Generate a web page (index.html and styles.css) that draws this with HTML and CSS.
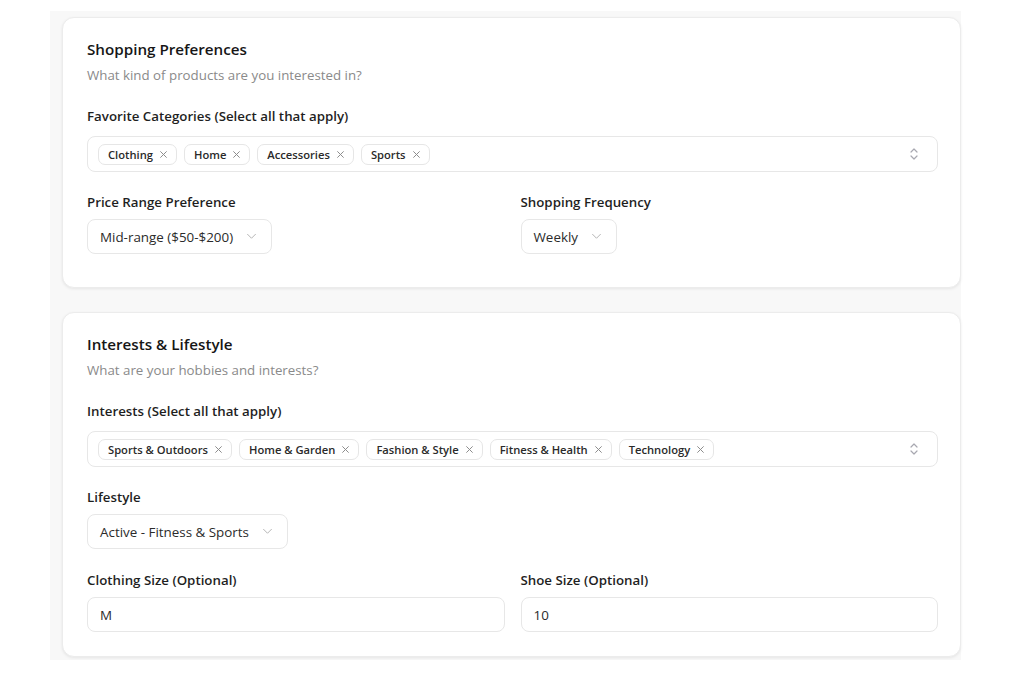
FILE: index.html
```html
<!DOCTYPE html>
<html lang="en">
<head>
<meta charset="utf-8">
<title>Preferences</title>
<link rel="stylesheet" href="styles.css">
</head>
<body>
<div class="frame">
  <section class="card card--roomy">
    <header class="card-head">
      <h2 class="card-title">Shopping Preferences</h2>
      <p class="card-sub">What kind of products are you interested in?</p>
    </header>
    <div class="field field--first">
      <label class="label">Favorite Categories (Select all that apply)</label>
      <div class="multi">
        <div class="chips">
          <span class="chip">Clothing<svg class="x" viewBox="0 0 10 10"><path d="M1.5 1.5l7 7M8.5 1.5l-7 7"/></svg></span>
          <span class="chip">Home<svg class="x" viewBox="0 0 10 10"><path d="M1.5 1.5l7 7M8.5 1.5l-7 7"/></svg></span>
          <span class="chip">Accessories<svg class="x" viewBox="0 0 10 10"><path d="M1.5 1.5l7 7M8.5 1.5l-7 7"/></svg></span>
          <span class="chip">Sports<svg class="x" viewBox="0 0 10 10"><path d="M1.5 1.5l7 7M8.5 1.5l-7 7"/></svg></span>
        </div>
        <svg class="updown" viewBox="0 0 10 16"><path d="M2 6l3-3 3 3M2 10l3 3 3-3"/></svg>
      </div>
    </div>
    <div class="grid2">
      <div class="field">
        <label class="label">Price Range Preference</label>
        <div><span class="select">Mid-range ($50-$200)<svg class="chev" viewBox="0 0 12 8"><path d="M1.5 1.5l4.5 4.5 4.5-4.5"/></svg></span></div>
      </div>
      <div class="field">
        <label class="label">Shopping Frequency</label>
        <div><span class="select">Weekly<svg class="chev" viewBox="0 0 12 8"><path d="M1.5 1.5l4.5 4.5 4.5-4.5"/></svg></span></div>
      </div>
    </div>
  </section>

  <section class="card">
    <header class="card-head">
      <h2 class="card-title">Interests &amp; Lifestyle</h2>
      <p class="card-sub">What are your hobbies and interests?</p>
    </header>
    <div class="field field--first">
      <label class="label">Interests (Select all that apply)</label>
      <div class="multi">
        <div class="chips">
          <span class="chip">Sports &amp; Outdoors<svg class="x" viewBox="0 0 10 10"><path d="M1.5 1.5l7 7M8.5 1.5l-7 7"/></svg></span>
          <span class="chip">Home &amp; Garden<svg class="x" viewBox="0 0 10 10"><path d="M1.5 1.5l7 7M8.5 1.5l-7 7"/></svg></span>
          <span class="chip">Fashion &amp; Style<svg class="x" viewBox="0 0 10 10"><path d="M1.5 1.5l7 7M8.5 1.5l-7 7"/></svg></span>
          <span class="chip">Fitness &amp; Health<svg class="x" viewBox="0 0 10 10"><path d="M1.5 1.5l7 7M8.5 1.5l-7 7"/></svg></span>
          <span class="chip">Technology<svg class="x" viewBox="0 0 10 10"><path d="M1.5 1.5l7 7M8.5 1.5l-7 7"/></svg></span>
        </div>
        <svg class="updown" viewBox="0 0 10 16"><path d="M2 6l3-3 3 3M2 10l3 3 3-3"/></svg>
      </div>
    </div>
    <div class="field">
      <label class="label">Lifestyle</label>
      <div><span class="select">Active - Fitness &amp; Sports<svg class="chev" viewBox="0 0 12 8"><path d="M1.5 1.5l4.5 4.5 4.5-4.5"/></svg></span></div>
    </div>
    <div class="grid2 grid2--tight">
      <div class="field">
        <label class="label">Clothing Size (Optional)</label>
        <div class="input">M</div>
      </div>
      <div class="field">
        <label class="label">Shoe Size (Optional)</label>
        <div class="input">10</div>
      </div>
    </div>
  </section>
</div>
</body>
</html>
```

FILE: styles.css
```css
* { box-sizing: border-box; }
html, body { margin: 0; padding: 0; background: #ffffff; }
body {
  font-family: "Open Sans", "Noto Sans", sans-serif;
  color: #1c1c1c;
}
.frame {
  margin: 11px 0 0 50px;
  width: 911px;
  height: 649px;
  background: #f8f8f8;
  padding: 6px 0 0 12px;
  display: flex;
  flex-direction: column;
  gap: 24px;
}
.card {
  width: 899px;
  background: #ffffff;
  border: 1px solid #ececec;
  border-radius: 12px;
  box-shadow: 0 1px 3px rgba(0,0,0,0.08);
  padding: 19px 22px 24px 24px;
  display: flex;
  flex-direction: column;
}
.card--roomy { padding-bottom: 33px; }
.card-head { margin-bottom: 21px; }
.card-title {
  margin: 0;
  font-size: 15.2px;
  line-height: 24px;
  font-weight: 600;
  color: #161616;
}
.card-sub {
  margin: 4px 0 0;
  font-size: 13.3px;
  line-height: 20px;
  color: #8a8a8a;
}
.field { display: flex; flex-direction: column; align-items: stretch; }
.card > .field:not(.field--first) { margin-top: 20px; }
.grid2 { margin-top: 20px; display: grid; grid-template-columns: 1fr 1fr; gap: 16px; }
.grid2--tight { margin-top: 21px; }
.label {
  font-size: 13.3px;
  line-height: 20px;
  font-weight: 600;
  color: #1f1f1f;
  margin-bottom: 7px;
}
.multi {
  margin-top: 3px;
  height: 36px;
  border: 1px solid #e7e7e7;
  border-radius: 8px;
  display: flex;
  align-items: center;
  justify-content: space-between;
  padding: 0 18px 0 10px;
}
.chips { display: flex; gap: 7px; }
.chip {
  display: inline-flex;
  align-items: center;
  height: 21px;
  border: 1px solid #e6e6e6;
  border-radius: 7px;
  padding: 0 8px 0 9px;
  font-size: 11.2px;
  font-weight: 600;
  color: #2a2a2a;
  gap: 6px;
}
.x { width: 9px; height: 9px; fill: none; stroke: #8c8c8c; stroke-width: 1.1; }
.updown { width: 10px; height: 16px; fill: none; stroke: #a8a8b0; stroke-width: 1.2; stroke-linecap: round; stroke-linejoin: round; }
.select {
  display: inline-flex;
  align-items: center;
  height: 35px;
  border: 1px solid #e7e7e7;
  border-radius: 8px;
  padding: 0 14px 0 12px;
  font-size: 13.4px;
  color: #2b2b2b;
  gap: 13px;
}
.chev { width: 11px; height: 7px; fill: none; stroke: #b3b3b3; stroke-width: 1.1; stroke-linecap: round; stroke-linejoin: round; }
.input {
  height: 35px;
  border: 1px solid #e7e7e7;
  border-radius: 8px;
  padding: 0 12px;
  display: flex;
  align-items: center;
  font-size: 13.4px;
  color: #2b2b2b;
}
```
